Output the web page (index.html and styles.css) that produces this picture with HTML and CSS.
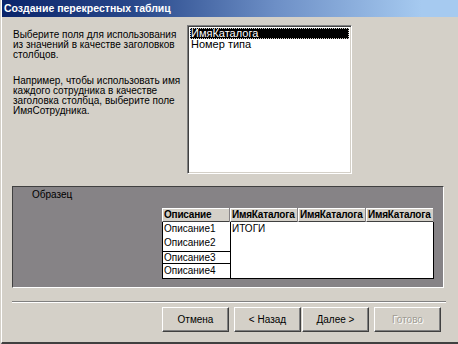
FILE: index.html
```html
<!DOCTYPE html>
<html lang="ru">
<head>
    <meta charset="UTF-8">
    <title>Создание перекрестных таблиц</title>
    <link rel="stylesheet" href="styles.css">
</head>
<body>

<div class="window">
    <div class="titlebar">Создание перекрестных таблиц</div>

    <div class="top">
        <div class="intro">
            <p>Выберите поля для использования<br>из значений в качестве заголовков<br>столбцов.</p>
            <p>Например, чтобы использовать имя<br>каждого сотрудника в качестве<br>заголовка столбца, выберите поле<br>ИмяСотрудника.</p>
        </div>
        <div class="listbox">
            <div class="item selected">ИмяКаталога</div>
            <div class="item">Номер типа</div>
        </div>
    </div>

    <div class="sample">
        <div class="sample-label">Образец</div>
        <div class="grid">
            <div class="grid-head">
                <div class="head-cell">Описание</div>
                <div class="head-cell">ИмяКаталога</div>
                <div class="head-cell">ИмяКаталога</div>
                <div class="head-cell">ИмяКаталога</div>
            </div>
            <div class="grid-body">
                <div class="row-col">
                    <div class="row r1">Описание1</div>
                    <div class="row r2">Описание2</div>
                    <div class="row r3">Описание3</div>
                    <div class="row r4">Описание4</div>
                </div>
                <div class="values">ИТОГИ</div>
            </div>
        </div>
    </div>

    <div class="separator"></div>

    <div class="buttons">
        <button class="btn">Отмена</button>
        <button class="btn">&lt; Назад</button>
        <button class="btn next">Далее &gt;</button>
        <button class="btn" disabled>Готово</button>
    </div>
</div>

</body>
</html>
```

FILE: styles.css
```css
body {
    margin: 0;
    padding: 0;
    background-color: #d4d0c8;
    font-family: "Liberation Sans", Arial, sans-serif;
    font-size: 10px;
    color: #000;
}
.window {
    width: 456px;
    height: 342px;
    margin-left: 1px;
    border-left: 1px solid #fff;
    border-bottom: 2px solid #404040;
    background-color: #d4d0c8;
    overflow: hidden;
}
.titlebar {
    height: 17px;
    line-height: 17px;
    padding-left: 2px;
    background: linear-gradient(to right, #0a246a 0%, #2a4a8c 30%, #6d8fc6 60%, #a6caf0 92%);
    color: #fff;
    font-weight: bold;
    font-size: 10.5px;
}
.top {
    display: flex;
    padding: 8px 0 0 11px;
}
.intro {
    width: 174px;
    padding-top: 5px;
    line-height: 10px;
    white-space: nowrap;
}
.intro p {
    margin: 0 0 16px 0;
}
.listbox {
    width: 161px;
    height: 145px;
    background-color: #fff;
    border-top: 1px solid #808080;
    border-left: 1px solid #808080;
    border-right: 1px solid #fff;
    border-bottom: 1px solid #fff;
    box-shadow: inset 1px 1px 0 #404040, inset -1px -1px 0 #d4d0c8;
    padding: 2px 0 0 2px;
    font-size: 11px;
}
.item {
    height: 11px;
    line-height: 11px;
    padding-left: 1px;
    margin-right: 2px;
    white-space: nowrap;
}
.item.selected {
    background-color: #000;
    color: #fff;
    outline: 1px dotted #d4d0c8;
    outline-offset: -1px;
}
.sample {
    width: 430px;
    height: 100px;
    margin: 12px 0 0 10px;
    background-color: #868386;
    border-top: 1px solid #404040;
    border-left: 1px solid #404040;
    border-right: 1px solid #fff;
    border-bottom: 1px solid #fff;
}
.sample-label {
    padding: 3px 0 0 19px;
    line-height: 10px;
}
.grid {
    margin: 8px 0 0 149px;
    width: 272px;
}
.grid-head {
    display: flex;
}
.head-cell {
    width: 65px;
    height: 12px;
    line-height: 12px;
    padding-left: 1px;
    margin-right: 1px;
    background-color: #d4d0c8;
    border-top: 1px solid #fff;
    border-left: 1px solid #fff;
    border-bottom: 1px solid #404040;
    font-weight: bold;
    letter-spacing: -0.2px;
    white-space: nowrap;
    overflow: hidden;
}
.grid-body {
    display: flex;
    height: 56px;
    background-color: #fff;
    border: 1px solid #000;
    border-top: none;
}
.row-col {
    width: 67px;
    border-right: 1px solid #000;
}
.row {
    padding-left: 1px;
    white-space: nowrap;
}
.r1 {
    height: 14px;
    line-height: 14px;
}
.r2 {
    height: 15px;
    line-height: 14px;
}
.r3 {
    height: 11px;
    line-height: 11px;
    border-top: 1px solid #000;
}
.r4 {
    height: 13px;
    line-height: 13px;
    border-top: 1px solid #000;
}
.values {
    flex: 1;
    padding: 2px 0 0 1px;
    line-height: 10px;
}
.separator {
    width: 434px;
    margin: 13px 0 0 10px;
    border-top: 1px solid #808080;
    border-bottom: 1px solid #fff;
}
.buttons {
    display: flex;
    padding: 4px 0 0 160px;
}
.btn {
    width: 67px;
    height: 25px;
    margin: 0 0 0 5px;
    padding: 0;
    background-color: #d4d0c8;
    border-top: 1px solid #fff;
    border-left: 1px solid #fff;
    border-right: 1px solid #404040;
    border-bottom: 1px solid #404040;
    box-shadow: inset -1px -1px 0 #808080;
    font-family: "Liberation Sans", Arial, sans-serif;
    font-size: 10px;
    color: #000;
}
.btn:first-child {
    margin-left: 0;
}
.btn.next {
    margin-left: 1px;
}
.btn:disabled {
    color: #a09c94;
    text-shadow: 1px 1px 0 #fff;
}
```
